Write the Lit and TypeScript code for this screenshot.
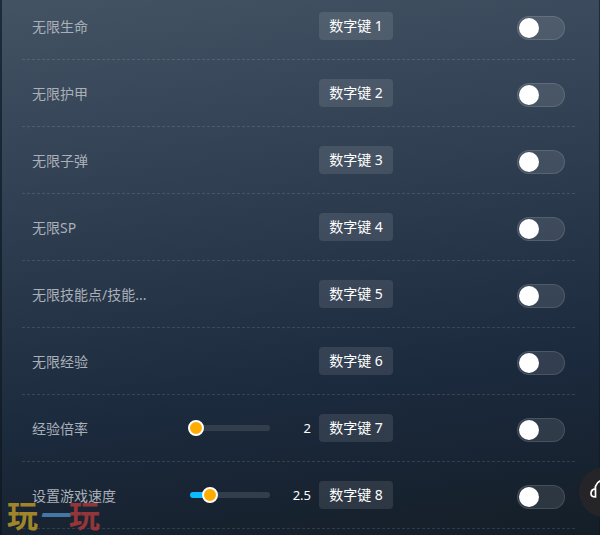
import { LitElement, html, css } from "lit";
import { customElement } from "lit/decorators.js";

interface Cheat {
  name: string;
  key: string;
  slider?: { value: string; min: number; max: number };
}

const CHEATS: Cheat[] = [
  { name: "无限生命", key: "数字键 1" },
  { name: "无限护甲", key: "数字键 2" },
  { name: "无限子弹", key: "数字键 3" },
  { name: "无限SP", key: "数字键 4" },
  { name: "无限技能点/技能...", key: "数字键 5" },
  { name: "无限经验", key: "数字键 6" },
  { name: "经验倍率", key: "数字键 7", slider: { value: "2", min: 0, max: 26 } },
  { name: "设置游戏速度", key: "数字键 8", slider: { value: "2.5", min: 0, max: 10 } },
];

@customElement("app-root")
export class AppRoot extends LitElement {
  static styles = css`
    :host {
      display: block;
      position: relative;
      height: 100vh;
      overflow: hidden;
      box-sizing: border-box;
      padding: 0 1px 0 2px;
      background: linear-gradient(#1a2c3d, #111a22);
      font-family: "Noto Sans", "Noto Sans CJK SC", sans-serif;
      font-size: 14px;
      line-height: 20px;
      color: #fff;
    }
    .panel {
      height: 100%;
      overflow: hidden;
      box-sizing: border-box;
      padding: 0 24px 0 20px;
      background: linear-gradient(172deg, #435364 0%, #1c2a3e 70%, #141e27 100%);
    }
    .list {
      list-style: none;
      margin: -7px 0 0;
      padding: 0;
    }
    .row {
      display: grid;
      grid-template-columns: 148px minmax(128px, 139fr) 74px minmax(48px, 172fr);
      align-items: center;
      height: 66px;
      padding: 0 10px;
      border-bottom: 1px dashed rgba(255, 255, 255, 0.12);
    }
    .name {
      padding-top: 2px;
      color: #a9b0b8;
      white-space: nowrap;
    }
    .amount {
      display: flex;
      align-items: center;
      justify-content: space-between;
      padding: 0 8px 0 10px;
      font-size: 13px;
    }
    .track {
      display: flex;
      align-items: center;
      width: 80px;
      height: 6px;
      border-radius: 3px;
      background: linear-gradient(#0bbcff, #0bbcff) left / var(--fill) 100% no-repeat, #323e4b;
    }
    .range {
      appearance: none;
      flex: none;
      width: 96px;
      height: 16px;
      margin: 0 -8px;
      background: none;
    }
    .range::-webkit-slider-thumb {
      appearance: none;
      box-sizing: border-box;
      width: 16px;
      height: 16px;
      border: 2px solid #fff;
      border-radius: 50%;
      background: #ffac00;
    }
    .key {
      height: 28px;
      padding: 0;
      border: 0;
      border-radius: 4px;
      background: rgba(255, 255, 255, 0.1);
      color: #fff;
      font: inherit;
    }
    .switch {
      appearance: none;
      box-sizing: border-box;
      justify-self: end;
      width: 48px;
      height: 24px;
      margin: 3px 0 0;
      padding: 1px;
      border: 1px solid rgba(255, 255, 255, 0.12);
      border-radius: 12px;
      background: rgba(255, 255, 255, 0.1);
    }
    .switch::before {
      content: "";
      display: block;
      width: 20px;
      height: 20px;
      border-radius: 50%;
      background: #fff;
    }
    .switch:checked::before {
      margin-left: auto;
    }
    .brand {
      position: absolute;
      left: 7px;
      bottom: 5px;
      display: flex;
      font-family: "Noto Sans CJK SC", sans-serif;
      font-size: 31px;
      font-weight: 700;
      line-height: 32px;
    }
    .gold { color: #a18629; }
    .blue { color: #4478a3; font-style: italic; }
    .red { color: #943639; }
    .support {
      position: absolute;
      right: -29px;
      bottom: 18px;
      width: 50px;
      height: 50px;
      padding: 0;
      border: 0;
      border-radius: 50%;
      background: #252428;
    }
    .support svg { display: block; margin: auto; }
  `;

  private row(c: Cheat, i: number) {
    const s = c.slider;
    const fill = s ? ((Number(s.value) - s.min) / (s.max - s.min)) * 100 : 0;
    return html`<li class="row">
      <label class="name" for="cheat-${i}">${c.name}</label>
      <div class="amount">
        ${s
          ? html`<span class="track" style="--fill: ${fill}%">
                <input class="range" type="range" aria-label=${c.name} min=${s.min} max=${s.max}
                  step="0.5" .value=${s.value} />
              </span>
              <span>${s.value}</span>`
          : ""}
      </div>
      <button class="key">${c.key}</button>
      <input class="switch" id="cheat-${i}" type="checkbox" />
    </li>`;
  }

  render() {
    return html`
      <main class="panel">
        <ul class="list">${CHEATS.map((c, i) => this.row(c, i))}</ul>
      </main>
      <div class="brand"><span class="gold">玩</span><span class="blue">一</span><span class="red">玩</span></div>
      <button class="support" aria-label="客服">
        <svg width="28" height="28" viewBox="0 0 28 28" fill="none" stroke="#fff" stroke-width="1.7">
          <path d="M5 12C5 6 9 2 14 2s9 4 9 10M5.500 11C2.500 11 1 13 1 15.500S2.500 19 5.500 19zM22.500 11c3 0 4.500 2 4.500 4.500S25.500 19 22.500 19z" />
        </svg>
      </button>`;
  }
}
